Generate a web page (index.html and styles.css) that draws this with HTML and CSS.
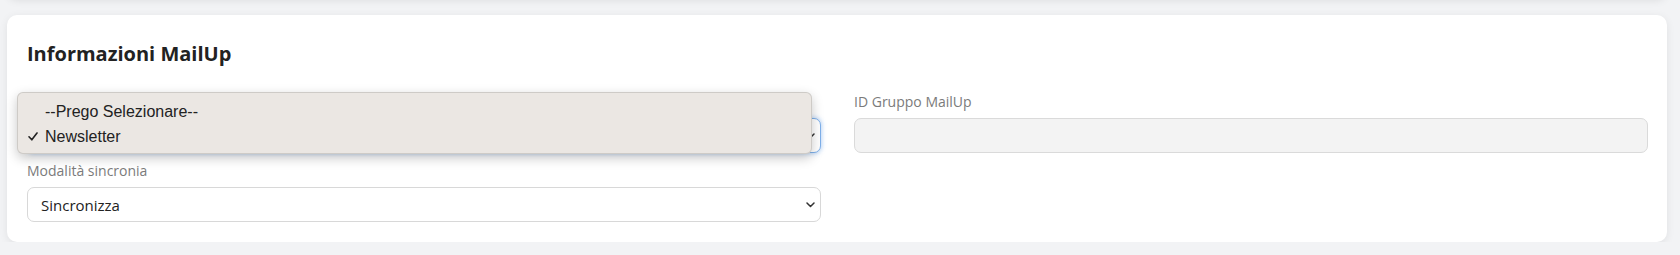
FILE: index.html
```html
<!DOCTYPE html>
<html lang="it">
<head>
<meta charset="utf-8">
<title>Informazioni MailUp</title>
<link rel="stylesheet" href="styles.css">
</head>
<body>
<div class="page">
  <div class="prev-card"></div>
  <section class="card">
    <h2 class="card-title">Informazioni MailUp</h2>
    <div class="grid">
      <div class="col">
        <div class="field">
          <label class="label">&nbsp;</label>
          <div class="select is-focus">
            <span class="select-value">&nbsp;</span>
            <svg class="chevron" width="9" height="6" viewBox="0 0 9 6"><path d="M1 1 L4.5 4.5 L8 1" fill="none" stroke="#333" stroke-width="1.5" stroke-linecap="round" stroke-linejoin="round"/></svg>
          </div>
        </div>
        <div class="field">
          <label class="label">Modalità sincronia</label>
          <div class="select">
            <span class="select-value">Sincronizza</span>
            <svg class="chevron" width="9" height="6" viewBox="0 0 9 6"><path d="M1 1 L4.5 4.5 L8 1" fill="none" stroke="#333" stroke-width="1.5" stroke-linecap="round" stroke-linejoin="round"/></svg>
          </div>
        </div>
      </div>
      <div class="col">
        <div class="field">
          <label class="label">ID Gruppo MailUp</label>
          <div class="input is-disabled"></div>
        </div>
      </div>
    </div>
    <ul class="popup">
      <li class="popup-item"><span class="check-slot"></span>--Prego Selezionare--</li>
      <li class="popup-item"><span class="check-slot"><svg width="10" height="9" viewBox="0 0 10 9"><path d="M1 4.8 L3.8 7.8 L9 1" fill="none" stroke="#222" stroke-width="1.6" stroke-linecap="round" stroke-linejoin="round"/></svg></span>Newsletter</li>
    </ul>
  </section>
</div>
</body>
</html>
```
FILE: styles.css
```css
html, body {
  margin: 0;
  padding: 0;
}
body {
  background: #f2f3f5;
  font-family: "Open Sans", "Noto Sans", sans-serif;
  color: #222;
  overflow: hidden;
}
.page {
  padding: 0 13px 0 7px;
}
.prev-card {
  height: 40px;
  margin-top: -42px;
  margin-bottom: 17px;
  background: #fff;
  border-radius: 10px;
  box-shadow: 0 2px 8px rgba(0, 0, 0, 0.1);
}
.card {
  position: relative;
  background: #fff;
  border-radius: 10px;
  box-shadow: 0 2px 9px rgba(0, 0, 0, 0.08);
  padding: 26px 19px 20px 20px;
}
.card-title {
  margin: 0 0 25px;
  font-size: 20px;
  line-height: 26px;
  font-weight: 700;
  color: #222;
}
.grid {
  display: grid;
  grid-template-columns: 1fr 1fr;
  column-gap: 33px;
}
.field + .field {
  margin-top: 8px;
}
.label {
  display: block;
  font-size: 14px;
  line-height: 20px;
  color: #7b7b7b;
  margin-bottom: 6px;
}
.select {
  box-sizing: border-box;
  height: 35px;
  display: flex;
  align-items: center;
  justify-content: space-between;
  padding: 0 5px 0 13px;
  border: 1px solid #d8d8d8;
  border-radius: 7px;
  background: #fff;
  font-size: 15px;
  color: #222;
}
.select.is-focus {
  border-color: #7eb0ea;
  box-shadow: 0 0 4px 1px rgba(70, 140, 230, 0.35);
}
.chevron {
  display: block;
}
.input {
  box-sizing: border-box;
  height: 35px;
  border: 1px solid #dadada;
  border-radius: 7px;
  background: #fff;
}
.input.is-disabled {
  background: #f3f3f3;
}
.popup {
  position: absolute;
  left: 10px;
  top: 77px;
  width: 795px;
  box-sizing: border-box;
  height: 62px;
  margin: 0;
  padding: 6px 0;
  list-style: none;
  background: #ebe7e3;
  border: 1px solid rgba(0, 0, 0, 0.12);
  border-radius: 6px;
  box-shadow: 0 4px 12px rgba(0, 0, 0, 0.22);
  font-family: "Liberation Sans", Arial, sans-serif;
  font-size: 16px;
  color: #222;
}
.popup-item {
  height: 25px;
  display: flex;
  align-items: center;
  padding-left: 10px;
}
.check-slot {
  width: 17px;
  display: flex;
  align-items: center;
}
.check-slot svg {
  display: block;
}
```
